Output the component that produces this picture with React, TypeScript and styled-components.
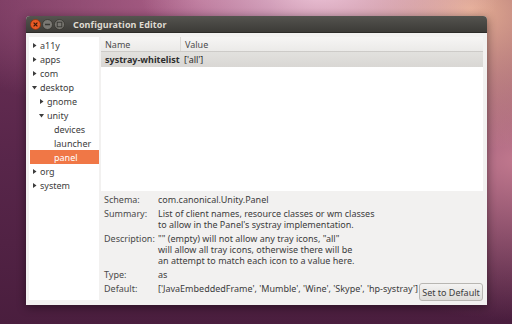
import React from "react";
import styled, { createGlobalStyle } from "styled-components";

const Global = createGlobalStyle`
  html, body { margin: 0; padding: 0; }
  body {
    width: 512px; height: 324px; overflow: hidden;
    font-family: "Noto Sans", "DejaVu Sans", sans-serif;
    background:
      radial-gradient(ellipse 180px 90px at 320px -10px, rgba(240,200,220,0.95), rgba(240,200,220,0) 100%),
      radial-gradient(ellipse 200px 140px at 470px 10px, rgba(236,180,150,0.95), rgba(236,180,150,0) 100%),
      radial-gradient(ellipse 260px 160px at 520px 160px, rgba(205,130,150,0.9), rgba(205,130,150,0) 100%),
      radial-gradient(ellipse 300px 120px at 200px 0px, rgba(190,110,150,0.8), rgba(190,110,150,0) 100%),
      linear-gradient(180deg, #6a2f55 0%, #58264a 50%, #4a1e3e 100%);
  }
`;

const Desktop = styled.div`
  width: 512px; height: 324px;
  box-sizing: border-box;
  padding: 16px 0 0 26px;
`;

const Window = styled.div`
  width: 461px; height: 289px;
  display: flex; flex-direction: column;
  border-radius: 4px 4px 0 0;
  box-shadow: 0 2px 10px rgba(0,0,0,0.45);
  background: #f2f1f0;
  overflow: hidden;
`;

const TitleBar = styled.div`
  height: 17px; flex: none;
  display: flex; align-items: center;
  padding-left: 4px;
  background: linear-gradient(180deg, #55544f 0%, #3c3b37 100%);
  border-bottom: 1px solid #2c2b28;
  box-sizing: border-box;
`;

const Buttons = styled.div`
  display: flex; align-items: center; gap: 1px;
  margin-right: 8px;
`;

const Title = styled.div`
  font-size: 9px; font-weight: bold; color: #dfdbd2;
  letter-spacing: 0.1px;
`;

const Body = styled.div`
  flex: 1; display: flex;
  padding: 4px 4px 5px 3px;
  gap: 2px;
  min-height: 0;
`;

const Tree = styled.div`
  width: 70px; background: #fff;
  padding-top: 1px;
  box-sizing: border-box;
  display: flex; flex-direction: column;
`;

const TreeRow = styled.div<{ $level: number; $selected?: boolean }>`
  height: 14px; display: flex; align-items: center;
  padding-left: ${(p) => 2 + p.$level * 7}px;
  margin-left: 1px;
  font-size: 9px;
  color: ${(p) => (p.$selected ? "#fff" : "#3c3c3c")};
  background: ${(p) => (p.$selected ? "#f07746" : "transparent")};
`;

const Expander = styled.span`
  width: 8px; flex: none; display: flex; align-items: center;
`;

const Spacer = styled.span`
  width: 8px; flex: none;
`;

const Right = styled.div`
  flex: 1; display: flex; flex-direction: column; min-width: 0;
`;

const List = styled.div`
  height: 154px; background: #fff; flex: none;
  display: flex; flex-direction: column;
`;

const HeaderRow = styled.div`
  height: 15px; display: flex;
  background: linear-gradient(180deg, #f6f5f4, #ebeae8);
  border-bottom: 1px solid #cdcbc8;
  box-sizing: border-box;
`;

const HeaderCell = styled.div<{ $w?: number }>`
  ${(p) => (p.$w ? `width: ${p.$w}px; border-right: 1px solid #dcdad6;` : "flex: 1;")}
  box-sizing: border-box;
  font-size: 9px; color: #4c4c4c;
  padding-left: 4px;
  display: flex; align-items: center;
`;

const DataRow = styled.div`
  height: 15px; display: flex;
  background: linear-gradient(180deg, #e2e1de, #d9d7d4);
`;

const DataCell = styled.div<{ $w?: number; $bold?: boolean }>`
  ${(p) => (p.$w ? `width: ${p.$w}px;` : "flex: 1;")}
  box-sizing: border-box;
  font-size: 9px; color: #2e2e2e;
  font-weight: ${(p) => (p.$bold ? "bold" : "normal")};
  padding-left: ${(p) => (p.$bold ? 4 : 3)}px;
  display: flex; align-items: center;
  white-space: nowrap;
`;

const Details = styled.div`
  display: flex; flex-direction: column; gap: 3px;
  padding: 3px 0 0 3px;
`;

const DetailRow = styled.div`
  display: flex; align-items: flex-start;
`;

const Label = styled.div`
  width: 54px; flex: none;
  font-size: 9px; line-height: 11px; color: #4a4a4a;
`;

const Value = styled.div`
  font-size: 9px; line-height: 11px; color: #3c3c3c;
  white-space: pre;
`;

const DefaultButton = styled.button`
  margin-left: auto;
  height: 18px; width: 64px; padding: 0;
  white-space: nowrap;
  font-family: inherit; font-size: 9px; color: #3c3c3c;
  border: 1px solid #b8b6b2; border-radius: 3px;
  background: linear-gradient(180deg, #f4f3f2, #dedcd9);
`;

function Arrow({ down }: { down?: boolean }) {
  return (
    <Expander>
      <svg width="5" height="5" viewBox="0 0 5 5">
        {down ? <polygon points="0,1 5,1 2.5,4.5" fill="#3c3c3c" /> : <polygon points="1,0 4.5,2.5 1,5" fill="#3c3c3c" />}
      </svg>
    </Expander>
  );
}

function WinButton({ kind }: { kind: "close" | "min" | "max" }) {
  const close = kind === "close";
  return (
    <svg width="11" height="11" viewBox="0 0 11 11">
      <circle cx="5.5" cy="5.5" r="5" fill={close ? "#e95a25" : "#7a7873"} stroke={close ? "#8c3512" : "#36352f"} strokeWidth="0.8" />
      {close && <path d="M3.6 3.6 L7.4 7.4 M7.4 3.6 L3.6 7.4" stroke="#3a1a0a" strokeWidth="1.2" />}
      {kind === "min" && <path d="M3 5.5 H8" stroke="#3a3935" strokeWidth="1.3" />}
      {kind === "max" && <rect x="3.2" y="3.2" width="4.6" height="4.6" fill="none" stroke="#3a3935" strokeWidth="1" />}
    </svg>
  );
}

const tree: { label: string; level: number; kind: "closed" | "open" | "leaf"; selected?: boolean }[] = [
  { label: "a11y", level: 0, kind: "closed" },
  { label: "apps", level: 0, kind: "closed" },
  { label: "com", level: 0, kind: "closed" },
  { label: "desktop", level: 0, kind: "open" },
  { label: "gnome", level: 1, kind: "closed" },
  { label: "unity", level: 1, kind: "open" },
  { label: "devices", level: 2, kind: "leaf" },
  { label: "launcher", level: 2, kind: "leaf" },
  { label: "panel", level: 2, kind: "leaf", selected: true },
  { label: "org", level: 0, kind: "closed" },
  { label: "system", level: 0, kind: "closed" },
];

export default function App() {
  return (
    <>
      <Global />
      <Desktop>
        <Window>
          <TitleBar>
            <Buttons>
              <WinButton kind="close" />
              <WinButton kind="min" />
              <WinButton kind="max" />
            </Buttons>
            <Title>Configuration Editor</Title>
          </TitleBar>
          <Body>
            <Tree>
              {tree.map((t) => (
                <TreeRow key={t.label} $level={t.level} $selected={t.selected}>
                  {t.kind === "leaf" ? <Spacer /> : <Arrow down={t.kind === "open"} />}
                  {t.label}
                </TreeRow>
              ))}
            </Tree>
            <Right>
              <List>
                <HeaderRow>
                  <HeaderCell $w={80}>Name</HeaderCell>
                  <HeaderCell>Value</HeaderCell>
                </HeaderRow>
                <DataRow>
                  <DataCell $w={80} $bold>systray-whitelist</DataCell>
                  <DataCell>['all']</DataCell>
                </DataRow>
              </List>
              <Details>
                <DetailRow>
                  <Label>Schema:</Label>
                  <Value>com.canonical.Unity.Panel</Value>
                </DetailRow>
                <DetailRow>
                  <Label>Summary:</Label>
                  <Value>{"List of client names, resource classes or wm classes\nto allow in the Panel's systray implementation."}</Value>
                </DetailRow>
                <DetailRow>
                  <Label>Description:</Label>
                  <Value>{"\"\" (empty) will not allow any tray icons, \"all\"\nwill allow all tray icons, otherwise there will be\nan attempt to match each icon to a value here."}</Value>
                </DetailRow>
                <DetailRow>
                  <Label>Type:</Label>
                  <Value>as</Value>
                </DetailRow>
                <DetailRow>
                  <Label>Default:</Label>
                  <Value>['JavaEmbeddedFrame', 'Mumble', 'Wine', 'Skype', 'hp-systray']</Value>
                  <DefaultButton>Set to Default</DefaultButton>
                </DetailRow>
              </Details>
            </Right>
          </Body>
        </Window>
      </Desktop>
    </>
  );
}
